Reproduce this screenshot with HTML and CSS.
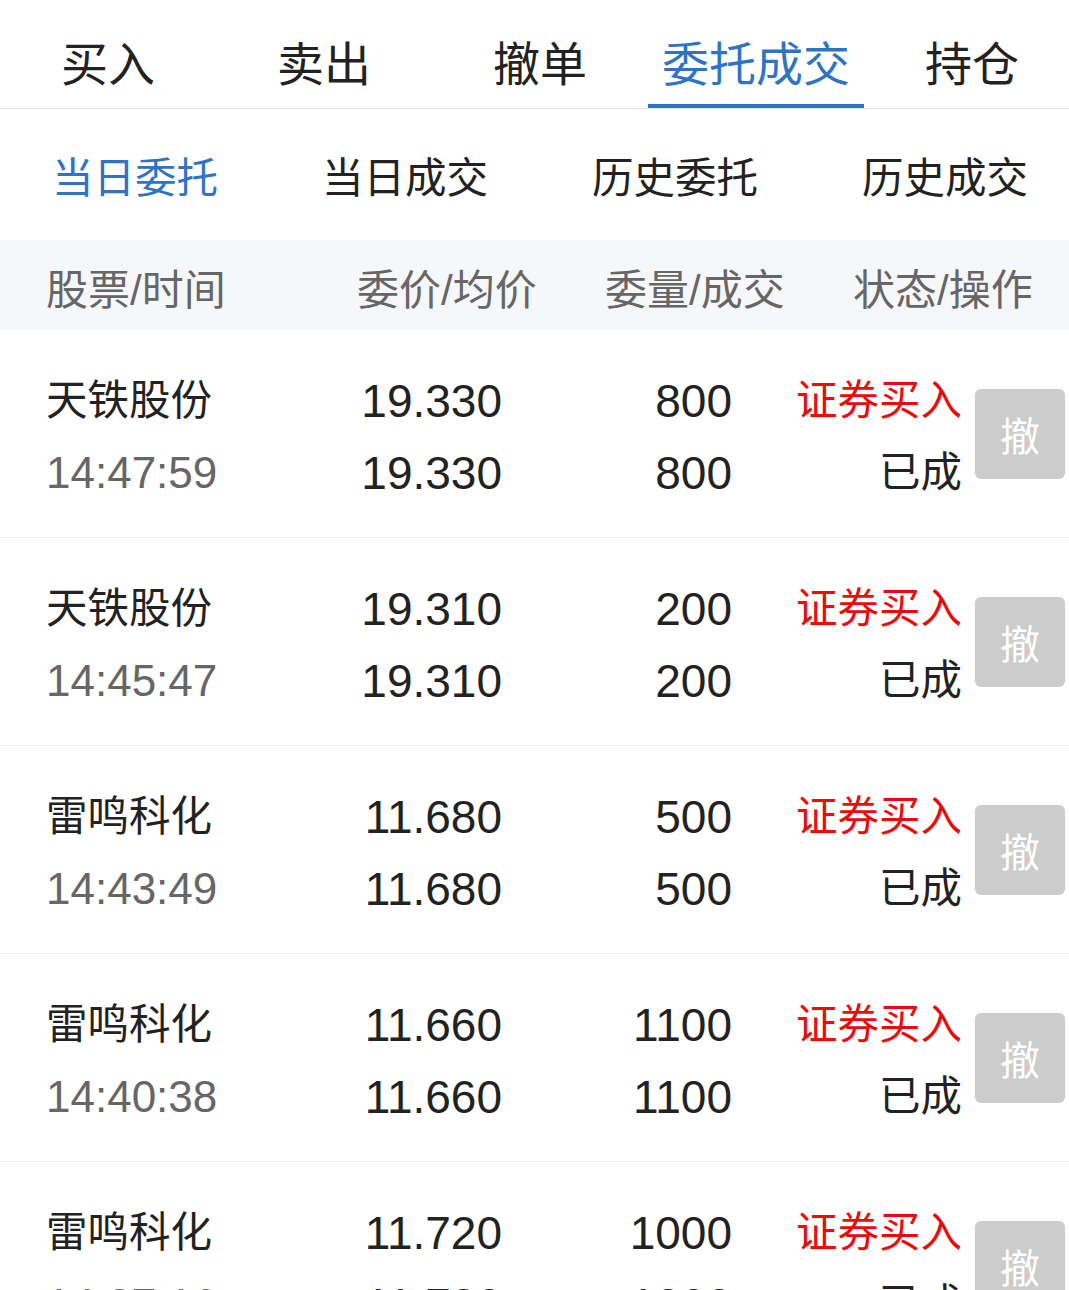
FILE: index.html
```html
<!DOCTYPE html>
<html lang="zh-CN">
<head>
<meta charset="utf-8">
<title>委托成交</title>
<link rel="stylesheet" href="styles.css">
</head>
<body>
<div class="page">
  <nav class="tabs">
    <div class="tab">买入</div>
    <div class="tab">卖出</div>
    <div class="tab">撤单</div>
    <div class="tab active">委托成交</div>
    <div class="tab">持仓</div>
  </nav>
  <nav class="subtabs">
    <div class="subtab active">当日委托</div>
    <div class="subtab">当日成交</div>
    <div class="subtab">历史委托</div>
    <div class="subtab">历史成交</div>
  </nav>
  <div class="thead">
    <div>股票/时间</div>
    <div>委价/均价</div>
    <div>委量/成交</div>
    <div>状态/操作</div>
  </div>
  <div class="list">
    <div class="row">
      <div class="cell name"><span>天铁股份</span><span class="time">14:47:59</span></div>
      <div class="cell num"><span>19.330</span><span>19.330</span></div>
      <div class="cell num"><span>800</span><span>800</span></div>
      <div class="cell status"><span class="red">证券买入</span><span>已成</span></div>
      <div class="btn">撤</div>
    </div>
    <div class="row">
      <div class="cell name"><span>天铁股份</span><span class="time">14:45:47</span></div>
      <div class="cell num"><span>19.310</span><span>19.310</span></div>
      <div class="cell num"><span>200</span><span>200</span></div>
      <div class="cell status"><span class="red">证券买入</span><span>已成</span></div>
      <div class="btn">撤</div>
    </div>
    <div class="row">
      <div class="cell name"><span>雷鸣科化</span><span class="time">14:43:49</span></div>
      <div class="cell num"><span>11.680</span><span>11.680</span></div>
      <div class="cell num"><span>500</span><span>500</span></div>
      <div class="cell status"><span class="red">证券买入</span><span>已成</span></div>
      <div class="btn">撤</div>
    </div>
    <div class="row">
      <div class="cell name"><span>雷鸣科化</span><span class="time">14:40:38</span></div>
      <div class="cell num"><span>11.660</span><span>11.660</span></div>
      <div class="cell num"><span>1100</span><span>1100</span></div>
      <div class="cell status"><span class="red">证券买入</span><span>已成</span></div>
      <div class="btn">撤</div>
    </div>
    <div class="row">
      <div class="cell name"><span>雷鸣科化</span><span class="time">14:37:16</span></div>
      <div class="cell num"><span>11.720</span><span>11.720</span></div>
      <div class="cell num"><span>1000</span><span>1000</span></div>
      <div class="cell status"><span class="red">证券买入</span><span>已成</span></div>
      <div class="btn">撤</div>
    </div>
  </div>
</div>
</body>
</html>
```

FILE: styles.css
```css
html, body {
  margin: 0;
  padding: 0;
  background: #fff;
}
body {
  font-family: "Liberation Sans", "Noto Sans CJK SC", sans-serif;
  color: #222;
  width: 1069px;
  height: 1290px;
  overflow: hidden;
}
.page {
  width: 1069px;
  overflow: hidden;
}
.tabs {
  display: grid;
  grid-template-columns: repeat(5, 216px);
  height: 108px;
  border-bottom: 1px solid #e8e8e8;
}
.tab {
  display: flex;
  align-items: center;
  justify-content: center;
  font-size: 47px;
  color: #222;
  box-sizing: border-box;
  padding-top: 16px;
  border-bottom: 4px solid transparent;
}
.tab.active {
  color: #2f73c6;
  border-bottom-color: #2f73c6;
}
.subtabs {
  display: grid;
  grid-template-columns: repeat(4, 270px);
  height: 131px;
}
.subtab {
  display: flex;
  align-items: center;
  justify-content: center;
  font-size: 41.5px;
  color: #222;
  padding-top: 1px;
}
.subtab.active {
  color: #2f73c6;
}
.thead {
  display: grid;
  grid-template-columns: 311px 248px 248px 1fr;
  padding-left: 46px;
  height: 90px;
  align-items: center;
  background: #f6f7f9;
  font-size: 42px;
  color: #666;
}
.thead div {
  padding-top: 2px;
  white-space: nowrap;
}
.row {
  display: grid;
  grid-template-columns: 266px 190px 230px 230px 103px;
  padding: 35px 4px 28px 46px;
  border-bottom: 1px solid #ececec;
  align-items: center;
}
.cell {
  display: flex;
  flex-direction: column;
}
.cell span {
  height: 72px;
  line-height: 72px;
  white-space: nowrap;
}
.name span {
  font-size: 41.5px;
  color: #222;
}
.name .time {
  font-size: 44px;
  color: #666;
}
.num {
  align-items: flex-end;
  font-size: 46px;
  color: #222;
}
.status {
  align-items: flex-end;
  font-size: 41.5px;
  color: #222;
}
.status .red {
  color: #ee0a0a;
}
.btn {
  justify-self: end;
  width: 90px;
  height: 90px;
  margin-top: -6px;
  border-radius: 6px;
  background: #cccccc;
  color: #fff;
  font-size: 40px;
  display: flex;
  align-items: center;
  justify-content: center;
}
```
